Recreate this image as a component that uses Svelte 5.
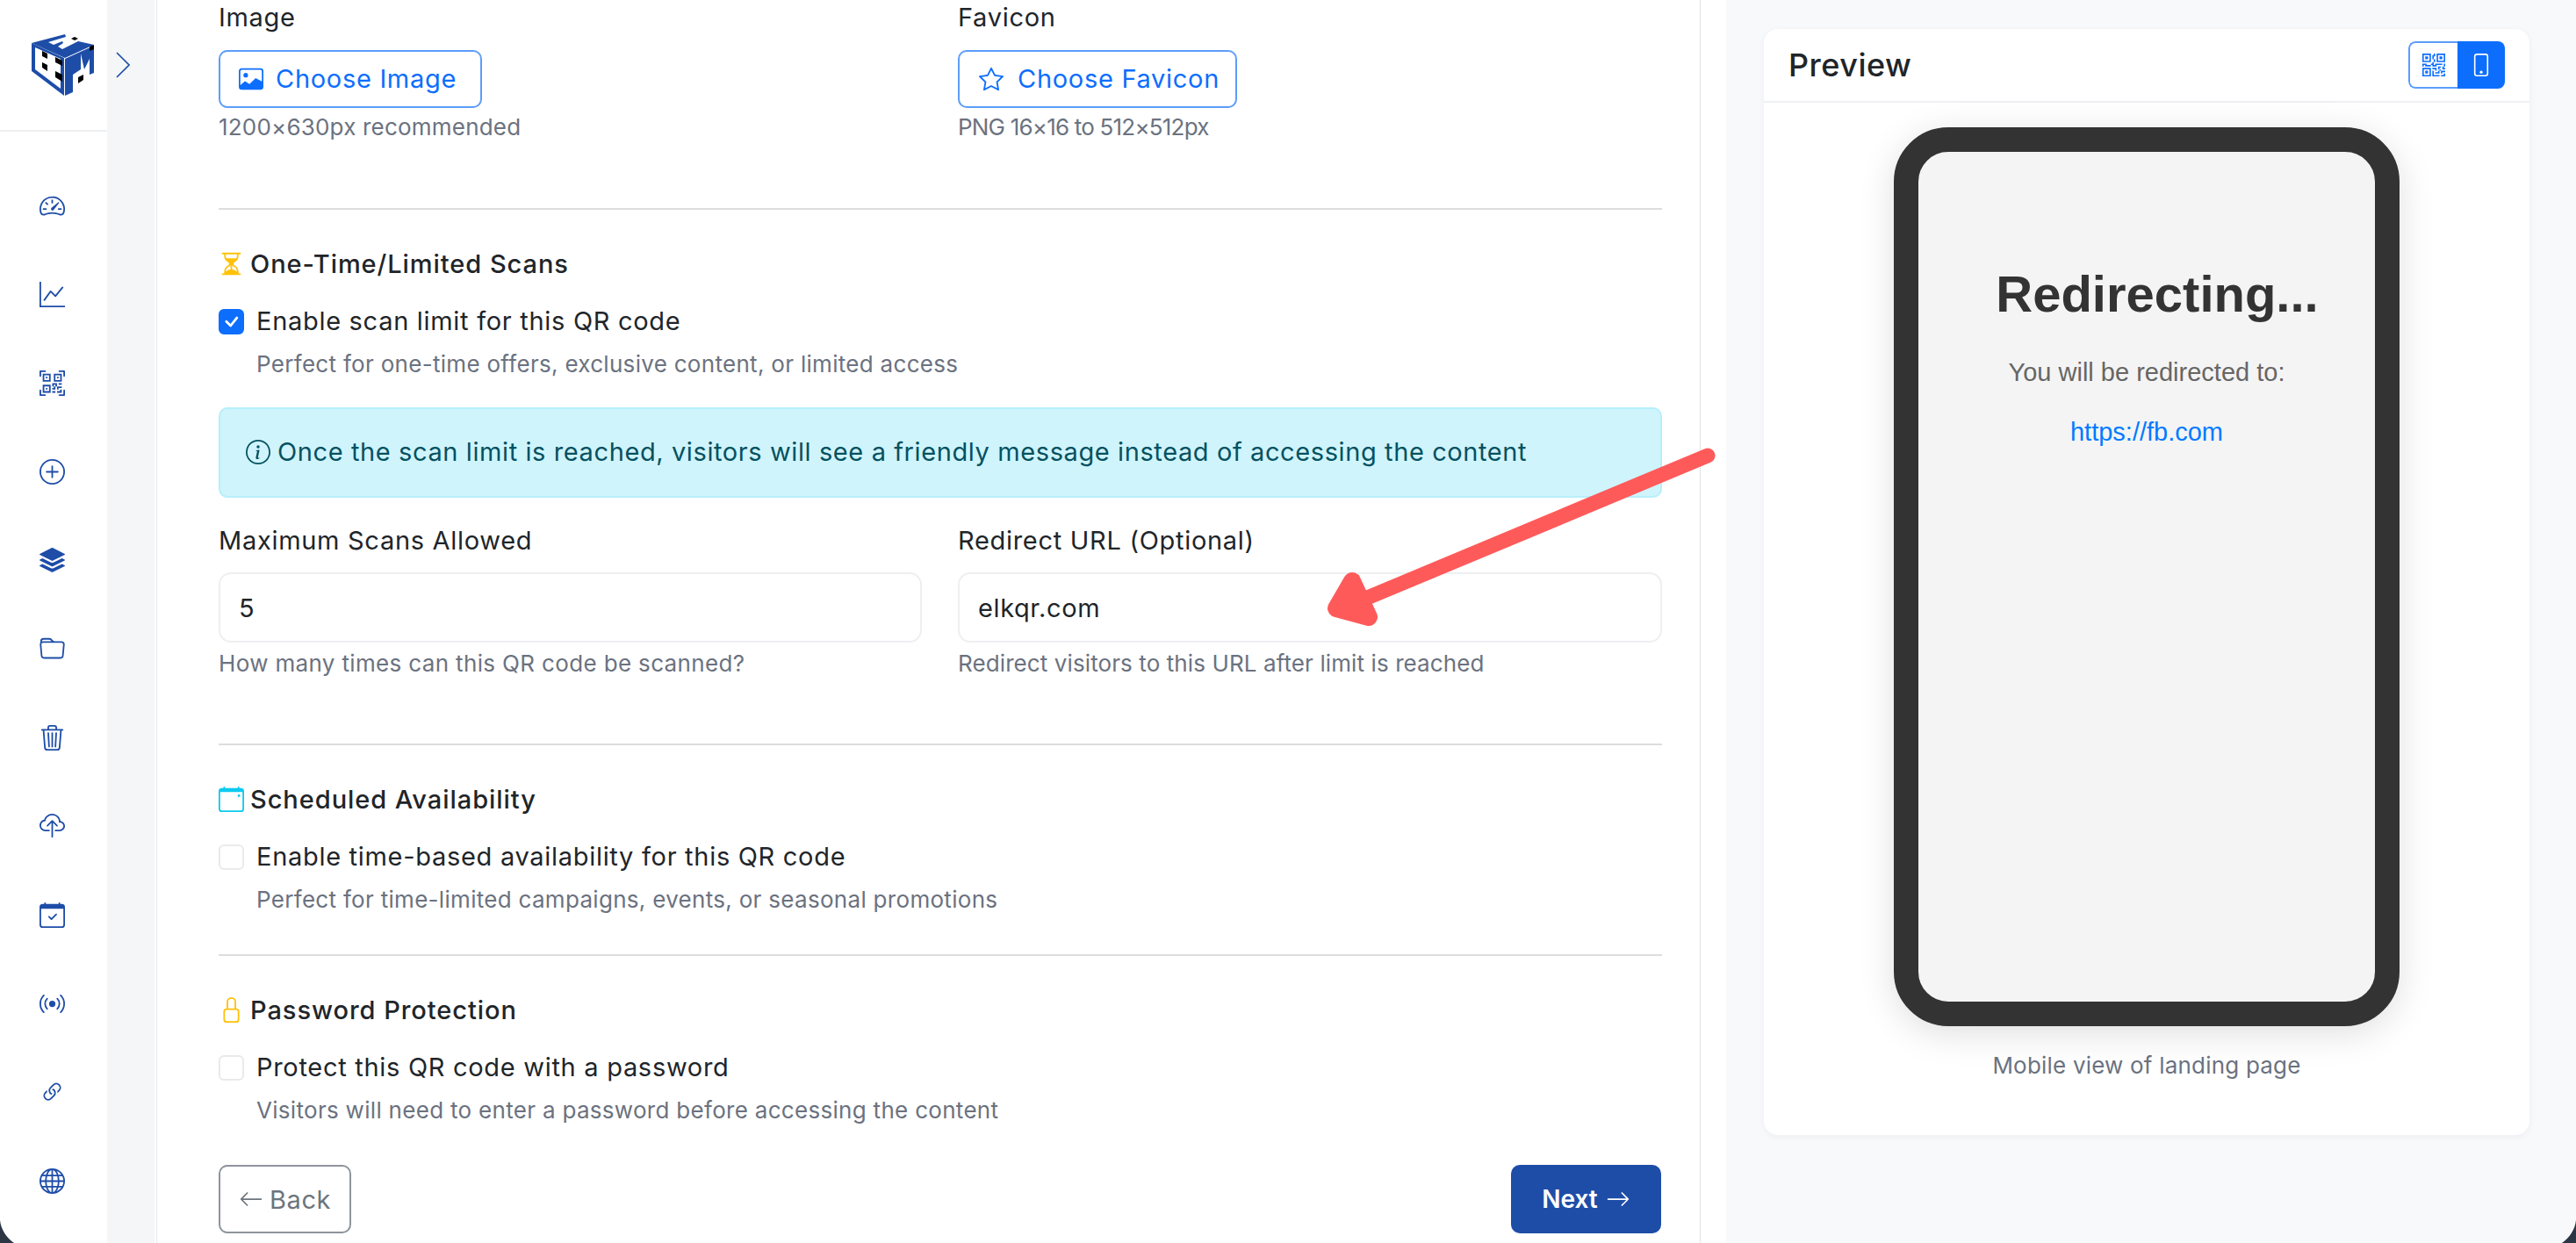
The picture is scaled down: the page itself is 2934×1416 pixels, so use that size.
<script>
  const icons = {
    speed: ["M8 4a.5.5 0 0 1 .5.5V6a.5.5 0 0 1-1 0V4.5A.5.5 0 0 1 8 4M3.732 5.732a.5.5 0 0 1 .707 0l.915.914a.5.5 0 1 1-.708.708l-.914-.915a.5.5 0 0 1 0-.707M2 10a.5.5 0 0 1 .5-.5h1.586a.5.5 0 0 1 0 1H2.5A.5.5 0 0 1 2 10m9.5 0a.5.5 0 0 1 .5-.5h1.5a.5.5 0 0 1 0 1H12a.5.5 0 0 1-.5-.5m.754-4.246a.39.39 0 0 0-.527-.02L7.547 9.31a.91.91 0 1 0 1.302 1.258l3.434-4.297a.39.39 0 0 0-.029-.518z", "M0 10a8 8 0 1 1 15.547 2.661c-.442 1.253-1.845 1.602-2.932 1.25C11.309 13.488 9.475 13 8 13c-1.474 0-3.31.488-4.615.911-1.087.352-2.49.003-2.932-1.25A8 8 0 0 1 0 10m8-7a7 7 0 0 0-6.603 9.329c.203.575.923.876 1.68.63C4.397 12.533 6.358 12 8 12s3.604.532 4.923.96c.757.245 1.477-.056 1.68-.631A7 7 0 0 0 8 3"],
    graph: ["M0 0h1v15h15v1H0zm14.817 3.113a.5.5 0 0 1 .07.704l-4.5 5.5a.5.5 0 0 1-.74.037L7.06 6.767l-3.656 5.027a.5.5 0 0 1-.808-.588l4-5.5a.5.5 0 0 1 .758-.06l2.609 2.61 4.15-5.073a.5.5 0 0 1 .704-.07"],
    qrscan: ["M0 .5A.5.5 0 0 1 .5 0h3a.5.5 0 0 1 0 1H1v2.5a.5.5 0 0 1-1 0zm12 0a.5.5 0 0 1 .5-.5h3a.5.5 0 0 1 .5.5v3a.5.5 0 0 1-1 0V1h-2.5a.5.5 0 0 1-.5-.5M.5 12a.5.5 0 0 1 .5.5V15h2.5a.5.5 0 0 1 0 1h-3a.5.5 0 0 1-.5-.5v-3a.5.5 0 0 1 .5-.5m15 0a.5.5 0 0 1 .5.5v3a.5.5 0 0 1-.5.5h-3a.5.5 0 0 1 0-1H15v-2.5a.5.5 0 0 1 .5-.5M4 4h1v1H4z", "M7 2H2v5h5zM3 3h3v3H3zm2 8H4v1h1z", "M7 9H2v5h5zm-4 1h3v3H3zm8-6h1v1h-1z", "M9 2h5v5H9zm1 1v3h3V3zM8 8v2h1v1H8v1h2v-2h1v2h1v-1h2v-1h-3V8zm2 2H9V9h1zm4 2h-1v1h-2v1h3zm-4 2v-1H8v1z", "M12 9h2V8h-2z"],
    qr: ["M2 2h2v2H2z", "M6 0v6H0V0zM5 1H1v4h4zM4 12H2v2h2z", "M6 10v6H0v-6zm-5 1v4h4v-4zm11-9h2v2h-2z", "M10 0v6h6V0zm5 1v4h-4V1zM8 1V0h1v2H8v2H7V1zm0 5V4h1v2zM6 8V7h1V6h1v2h1V7h5v1h-4v1H7V8zm0 0v1H2V8H1v1H0V7h3v1zm10 1h-1V7h1zm-1 0h-1v2h2v-1h-1zm-4 0h2v1h-1v1h-1zm2 3v-1h-1v1h-1v1H9v1h3v-2zm0 0h3v1h-2v1h-1zm-4-1v1h1v-2H7v1z", "M7 12h1v3h4v1H7zm9 2v2h-3v-1h2v-1z"],
    plus: ["M8 15A7 7 0 1 1 8 1a7 7 0 0 1 0 14m0 1A8 8 0 1 0 8 0a8 8 0 0 0 0 16", "M8 4a.5.5 0 0 1 .5.5v3h3a.5.5 0 0 1 0 1h-3v3a.5.5 0 0 1-1 0v-3h-3a.5.5 0 0 1 0-1h3v-3A.5.5 0 0 1 8 4"],
    stack: ["m14.12 10.163 1.715.858c.22.11.22.424 0 .534L8.267 15.34a.6.6 0 0 1-.534 0L.165 11.555a.299.299 0 0 1 0-.534l1.716-.858 5.317 2.659c.505.252 1.1.252 1.604 0l5.317-2.66zM7.733.063a.6.6 0 0 1 .534 0l7.568 3.784a.3.3 0 0 1 0 .535L8.267 8.165a.6.6 0 0 1-.534 0L.165 4.382a.299.299 0 0 1 0-.535z", "m14.12 6.576 1.715.858c.22.11.22.424 0 .534l-7.568 3.784a.6.6 0 0 1-.534 0L.165 7.968a.299.299 0 0 1 0-.534l1.716-.858 5.317 2.659c.505.252 1.1.252 1.604 0z"],
    folder: ["M.54 3.87.5 3a2 2 0 0 1 2-2h3.672a2 2 0 0 1 1.414.586l.828.828A2 2 0 0 0 9.828 3h3.982a2 2 0 0 1 1.992 2.181l-.637 7A2 2 0 0 1 13.174 14H2.826a2 2 0 0 1-1.991-1.819l-.637-7a2 2 0 0 1 .342-1.31zM2.19 4a1 1 0 0 0-.996 1.09l.637 7a1 1 0 0 0 .995.91h10.348a1 1 0 0 0 .995-.91l.637-7A1 1 0 0 0 13.81 4zm4.69-1.707A1 1 0 0 0 6.172 2H2.5a1 1 0 0 0-1 .981l.006.139q.323-.119.684-.12h5.396z"],
    trash: ["M6.5 1h3a.5.5 0 0 1 .5.5v1H6v-1a.5.5 0 0 1 .5-.5M11 2.5v-1A1.5 1.5 0 0 0 9.5 0h-3A1.5 1.5 0 0 0 5 1.5v1H1.5a.5.5 0 0 0 0 1h.538l.853 10.66A2 2 0 0 0 4.885 16h6.23a2 2 0 0 0 1.994-1.84l.853-10.66h.538a.5.5 0 0 0 0-1zm1.958 1-.846 10.58a1 1 0 0 1-.997.92h-6.23a1 1 0 0 1-.997-.92L3.042 3.5zm-7.487 1a.5.5 0 0 1 .528.47l.5 8.5a.5.5 0 0 1-.998.06L5 5.03a.5.5 0 0 1 .47-.53Zm5.058 0a.5.5 0 0 1 .47.53l-.5 8.5a.5.5 0 1 1-.998-.06l.5-8.5a.5.5 0 0 1 .528-.47M8 4.5a.5.5 0 0 1 .5.5v8.5a.5.5 0 0 1-1 0V5a.5.5 0 0 1 .5-.5"],
    cloud: ["M4.406 1.342A5.53 5.53 0 0 1 8 0c2.69 0 4.923 2 5.166 4.579C14.758 4.804 16 6.137 16 7.773 16 9.569 14.502 11 12.687 11H10a.5.5 0 0 1 0-1h2.688C13.979 10 15 8.988 15 7.773c0-1.216-1.02-2.228-2.313-2.228h-.5v-.5C12.188 2.825 10.328 1 8 1a4.53 4.53 0 0 0-2.941 1.1c-.757.652-1.153 1.438-1.153 2.055v.448l-.445.049C2.064 4.805 1 5.952 1 7.318 1 8.785 2.23 10 3.781 10H6a.5.5 0 0 1 0 1H3.781C1.708 11 0 9.366 0 7.318c0-1.763 1.266-3.223 2.942-3.593.143-.863.698-1.723 1.464-2.383", "M7.646 4.146a.5.5 0 0 1 .708 0l3 3a.5.5 0 0 1-.708.708L8.5 5.707V14.5a.5.5 0 0 1-1 0V5.707L5.354 7.854a.5.5 0 1 1-.708-.708z"],
    calcheck: ["M10.854 7.146a.5.5 0 0 1 0 .708l-3 3a.5.5 0 0 1-.708 0l-1.5-1.5a.5.5 0 1 1 .708-.708L7.5 9.793l2.646-2.647a.5.5 0 0 1 .708 0", "M3.5 0a.5.5 0 0 1 .5.5V1h8V.5a.5.5 0 0 1 1 0V1h1a2 2 0 0 1 2 2v11a2 2 0 0 1-2 2H2a2 2 0 0 1-2-2V3a2 2 0 0 1 2-2h1V.5a.5.5 0 0 1 .5-.5M1 4v10a1 1 0 0 0 1 1h12a1 1 0 0 0 1-1V4z"],
    broadcast: ["M3.05 3.05a7 7 0 0 0 0 9.9.5.5 0 0 1-.707.707 8 8 0 0 1 0-11.314.5.5 0 0 1 .707.707m2.122 2.122a4 4 0 0 0 0 5.656.5.5 0 1 1-.708.708 5 5 0 0 1 0-7.072.5.5 0 0 1 .708.708m5.656-.708a.5.5 0 0 1 .708 0 5 5 0 0 1 0 7.072.5.5 0 1 1-.708-.708 4 4 0 0 0 0-5.656.5.5 0 0 1 0-.708m2.122-2.12a.5.5 0 0 1 .707 0 8 8 0 0 1 0 11.313.5.5 0 0 1-.707-.707 7 7 0 0 0 0-9.9.5.5 0 0 1 0-.707zM10 8a2 2 0 1 1-4 0 2 2 0 0 1 4 0"],
    link: ["M4.715 6.542 3.343 7.914a3 3 0 1 0 4.243 4.243l1.828-1.829A3 3 0 0 0 8.586 5.5L8 6.086a1 1 0 0 0-.154.199 2 2 0 0 1 .861 3.337L6.88 11.45a2 2 0 1 1-2.83-2.83l.793-.792a4 4 0 0 1-.128-1.287z", "M6.586 4.672A3 3 0 0 0 7.414 9.5l.775-.776a2 2 0 0 1-.896-3.346L9.12 3.55a2 2 0 1 1 2.83 2.83l-.793.792c.112.42.155.855.128 1.287l1.372-1.372a3 3 0 1 0-4.243-4.243z"],
    globe: ["M0 8a8 8 0 1 1 16 0A8 8 0 0 1 0 8m7.5-6.923c-.67.204-1.335.82-1.887 1.855A8 8 0 0 0 5.145 4H7.5zM4.09 4a9.3 9.3 0 0 1 .64-1.539 7 7 0 0 1 .597-.933A7.03 7.03 0 0 0 2.255 4zm-.582 3.5c.03-.877.138-1.718.312-2.5H1.674a7 7 0 0 0-.656 2.5zM4.847 5a12.5 12.5 0 0 0-.338 2.5H7.5V5zM8.5 5v2.5h2.99a12.5 12.5 0 0 0-.337-2.5zM4.51 8.5a12.5 12.5 0 0 0 .337 2.5H7.5V8.5zm3.99 0V11h2.653c.187-.765.306-1.608.338-2.5zM5.145 12q.208.58.468 1.068c.552 1.035 1.218 1.65 1.887 1.855V12zm.182 2.472a7 7 0 0 1-.597-.933A9.3 9.3 0 0 1 4.09 12H2.255a7 7 0 0 0 3.072 2.472M3.82 11a13.7 13.7 0 0 1-.312-2.5h-2.49c.062.89.291 1.733.656 2.5zm6.853 3.472A7 7 0 0 0 13.745 12H11.91a9.3 9.3 0 0 1-.64 1.539 7 7 0 0 1-.597.933M8.5 12v2.923c.67-.204 1.335-.82 1.887-1.855q.26-.487.468-1.068zm3.68-1h2.146c.365-.767.594-1.61.656-2.5h-2.49a13.7 13.7 0 0 1-.312 2.5m2.802-3.5a7 7 0 0 0-.656-2.5H12.18c.174.782.282 1.623.312 2.5zM11.27 2.461c.247.464.462.98.64 1.539h1.835a7 7 0 0 0-3.072-2.472c.218.284.418.598.597.933M10.855 4a8 8 0 0 0-.468-1.068C9.835 1.897 9.17 1.282 8.5 1.077V4z"],
    image: ["M6.002 5.5a1.5 1.5 0 1 1-3 0 1.5 1.5 0 0 1 3 0", "M2.002 1a2 2 0 0 0-2 2v10a2 2 0 0 0 2 2h12a2 2 0 0 0 2-2V3a2 2 0 0 0-2-2zm12 1a1 1 0 0 1 1 1v6.5l-3.777-1.947a.5.5 0 0 0-.577.093l-3.71 3.71-2.66-1.772a.5.5 0 0 0-.63.062L1.002 12V3a1 1 0 0 1 1-1z"],
    star: ["M2.866 14.85c-.078.444.36.791.746.593l4.39-2.256 4.389 2.256c.386.198.824-.149.746-.592l-.83-4.73 3.522-3.356c.33-.314.16-.888-.282-.95l-4.898-.696L8.465.792a.513.513 0 0 0-.927 0L5.354 5.12l-4.898.696c-.441.062-.612.636-.283.95l3.523 3.356-.83 4.73zm4.905-2.767-3.686 1.894.694-3.957a.56.56 0 0 0-.163-.505L1.71 6.745l4.052-.576a.53.53 0 0 0 .393-.288L8 2.223l1.847 3.658a.53.53 0 0 0 .393.288l4.052.575-2.906 2.77a.56.56 0 0 0-.163.506l.694 3.957-3.686-1.894a.5.5 0 0 0-.461 0z"],
    hourglass: ["M2.5 15a.5.5 0 1 1 0-1h1v-1a4.5 4.5 0 0 1 2.557-4.06c.29-.139.443-.377.443-.59v-.7c0-.213-.154-.451-.443-.59A4.5 4.5 0 0 1 3.5 3V2h-1a.5.5 0 0 1 0-1h11a.5.5 0 0 1 0 1h-1v1a4.5 4.5 0 0 1-2.557 4.06c-.29.139-.443.377-.443.59v.7c0 .213.154.451.443.59A4.5 4.5 0 0 1 12.5 13v1h1a.5.5 0 0 1 0 1zm2-13v1c0 .537.12 1.045.337 1.5h6.326c.216-.455.337-.963.337-1.5V2zm3 6.35c0 .701-.478 1.236-1.011 1.492A3.5 3.5 0 0 0 4.5 13s.866-1.299 3-1.48zm1 0v3.17c2.134.181 3 1.48 3 1.48a3.5 3.5 0 0 0-1.989-3.158C8.978 9.586 8.5 9.052 8.5 8.351z"],
    calendar: ["M12 5.5a.5.5 0 0 1 .5-.5h.5a.5.5 0 0 1 .5.5v.5a.5.5 0 0 1-.5.5h-.5a.5.5 0 0 1-.5-.5z", "M3.5 0a.5.5 0 0 1 .5.5V1h8V.5a.5.5 0 0 1 1 0V1h1a2 2 0 0 1 2 2v11a2 2 0 0 1-2 2H2a2 2 0 0 1-2-2V3a2 2 0 0 1 2-2h1V.5a.5.5 0 0 1 .5-.5M1 3.4V14a1 1 0 0 0 1 1h12a1 1 0 0 0 1-1V3.4z"],
    lock: ["M8 1a2 2 0 0 1 2 2v4H6V3a2 2 0 0 1 2-2m3 6V3a3 3 0 0 0-6 0v4a2 2 0 0 0-2 2v5a2 2 0 0 0 2 2h6a2 2 0 0 0 2-2V9a2 2 0 0 0-2-2M5 8h6a1 1 0 0 1 1 1v5a1 1 0 0 1-1 1H5a1 1 0 0 1-1-1V9a1 1 0 0 1 1-1"],
    phone: ["M11 1a1 1 0 0 1 1 1v12a1 1 0 0 1-1 1H5a1 1 0 0 1-1-1V2a1 1 0 0 1 1-1zM5 0a2 2 0 0 0-2 2v12a2 2 0 0 0 2 2h6a2 2 0 0 0 2-2V2a2 2 0 0 0-2-2z", "M8 14a1 1 0 1 0 0-2 1 1 0 0 0 0 2"],
    info: ["M8 15A7 7 0 1 1 8 1a7 7 0 0 1 0 14m0 1A8 8 0 1 0 8 0a8 8 0 0 0 0 16", "m8.93 6.588-2.29.287-.082.38.45.083c.294.07.352.176.288.469l-.738 3.468c-.194.897.105 1.319.808 1.319.545 0 1.178-.252 1.465-.598l.088-.416c-.2.176-.492.246-.686.246-.275 0-.375-.193-.304-.533zM9 4.5a1 1 0 1 1-2 0 1 1 0 0 1 2 0"],
    left: ["M15 8a.5.5 0 0 0-.5-.5H2.707l3.147-3.146a.5.5 0 1 0-.708-.708l-4 4a.5.5 0 0 0 0 .708l4 4a.5.5 0 0 0 .708-.708L2.707 8.5H14.5A.5.5 0 0 0 15 8"],
    right: ["M1 8a.5.5 0 0 1 .5-.5h11.793l-3.147-3.146a.5.5 0 0 1 .708-.708l4 4a.5.5 0 0 1 0 .708l-4 4a.5.5 0 0 1-.708-.708L13.293 8.5H1.5A.5.5 0 0 1 1 8"],
    check: ["M10.97 4.97a.75.75 0 0 1 1.07 1.05l-3.99 4.99a.75.75 0 0 1-1.08.02L4.324 8.384a.75.75 0 1 1 1.06-1.06l2.094 2.093 3.473-4.425z"]
  };
  const nav = ["speed", "graph", "qrscan", "plus", "stack", "folder", "trash", "cloud", "calcheck", "broadcast", "link", "globe"];
</script>

{#snippet icon(name, cls)}
  <svg class={"ic " + cls} viewBox="0 0 16 16" fill="currentColor" aria-hidden="true">
    {#each icons[name] as d}<path {d} fill-rule="evenodd" />{/each}
  </svg>
{/snippet}

<div class="app">
  <aside class="sidebar">
    <div class="brand">
      <svg class="logo" viewBox="37 36 72 74" aria-hidden="true">
        <polygon points="37,48 74,65 74,108 37,80" fill="#1e4da8" />
        <polygon points="41,53 70,66 70,100 41,78" fill="#fff" />
        <polygon points="37,48 75,38 76,41 56,47 62,50 72,46 73,48 67,52 72,55 90,46 108,50 75,65" fill="#1e4da8" />
        <polygon points="75,66 108,51 108,82 103,84 103,66 97,78 93,60 93,78 84,84 84,104 75,108" fill="#1e4da8" />
        <polygon points="49,57 55,60 55,66 49,63" fill="#000" />
        <polygon points="49,70 55,73 55,80 49,76" fill="#000" />
        <polygon points="64,64 72,68 72,74 64,70" fill="#000" />
        <polygon points="64,80 72,84 72,92 64,87" fill="#000" />
        <polygon points="90,87 96,84 96,90 90,94" fill="#000" />
        <polygon points="82,43 86,41 90,43 86,45" fill="#000" />
        <polygon points="103,52 108,50 108,55 103,57" fill="#000" />
      </svg>
    </div>
    <nav class="nav">
      {#each nav as n}
        <a class="nav-item" href="#top">{@render icon(n, "nav-ic")}</a>
      {/each}
    </nav>
  </aside>

  <div class="strip">
    <svg class="chev" viewBox="0 0 16 30" fill="none" stroke="#1e4da8" stroke-width="1.6" aria-hidden="true"><path d="M1 1l14 14L1 29" /></svg>
  </div>

  <main class="panel">
    <div class="cols">
      <div>
        <div class="label">Image</div>
        <button class="pick pick-image">{@render icon("image", "pick-ic")}<span>Choose Image</span></button>
        <div class="hint">1200×630px recommended</div>
      </div>
      <div>
        <div class="label">Favicon</div>
        <button class="pick pick-fav">{@render icon("star", "pick-ic")}<span>Choose Favicon</span></button>
        <div class="hint hint-png">PNG 16×16 to 512×512px</div>
      </div>
    </div>

    <hr class="rule rule-a" />

    <h3 class="sec">{@render icon("hourglass", "sec-ic amber")}<span>One-Time/Limited Scans</span></h3>
    <div class="check-row">
      <span class="box on">{@render icon("check", "tick")}</span>
      <span class="check-label">Enable scan limit for this QR code</span>
    </div>
    <div class="check-desc">Perfect for one-time offers, exclusive content, or limited access</div>

    <div class="alert">{@render icon("info", "info-ic")}<span>Once the scan limit is reached, visitors will see a friendly message instead of accessing the content</span></div>

    <div class="cols fields">
      <div>
        <div class="label">Maximum Scans Allowed</div>
        <div class="input">5</div>
        <div class="hint hint-f">How many times can this QR code be scanned?</div>
      </div>
      <div>
        <div class="label">Redirect URL (Optional)</div>
        <div class="input">elkqr.com</div>
        <div class="hint hint-f hint-url">Redirect visitors to this URL after limit is reached</div>
      </div>
    </div>

    <hr class="rule rule-b" />

    <h3 class="sec">{@render icon("calendar", "sec-ic cyan")}<span>Scheduled Availability</span></h3>
    <div class="check-row"><span class="box"></span><span class="check-label">Enable time-based availability for this QR code</span></div>
    <div class="check-desc">Perfect for time-limited campaigns, events, or seasonal promotions</div>

    <hr class="rule rule-c" />

    <h3 class="sec">{@render icon("lock", "sec-ic amber")}<span>Password Protection</span></h3>
    <div class="check-row"><span class="box"></span><span class="check-label">Protect this QR code with a password</span></div>
    <div class="check-desc">Visitors will need to enter a password before accessing the content</div>

    <div class="actions">
      <button class="btn back">{@render icon("left", "btn-ic")}<span>Back</span></button>
      <button class="btn next"><span>Next</span>{@render icon("right", "btn-ic")}</button>
    </div>
  </main>

  <div class="gutter"></div>

  <section class="side">
    <div class="card">
      <header class="card-head">
        <h2>Preview</h2>
        <div class="toggle">
          <span class="tg first">{@render icon("qr", "tg-ic")}</span>
          <span class="tg active">{@render icon("phone", "tg-ic")}</span>
        </div>
      </header>
      <div class="card-body">
        <div class="device">
          <div class="screen">
            <h1>Redirecting...</h1>
            <p>You will be redirected to:</p>
            <a href="#top">https://fb.com</a>
          </div>
        </div>
        <div class="caption">Mobile view of landing page</div>
      </div>
    </div>
  </section>

  <svg class="arrow" viewBox="0 0 2934 1416" aria-hidden="true">
    <line x1="1945" y1="519" x2="1550" y2="684" stroke="#ff5a5a" stroke-width="17" stroke-linecap="round" />
    <polygon points="1540,662 1522,693 1559,703" fill="#ff5a5a" stroke="#ff5a5a" stroke-width="20" stroke-linejoin="round" />
  </svg>
  <svg class="corner corner-l" viewBox="0 0 16 26" aria-hidden="true"><path d="M0 0C1 10 7 20 16 26H0z" fill="#2c3644" /></svg>
  <svg class="corner corner-r" viewBox="0 0 16 26" aria-hidden="true"><path d="M16 0C15 10 9 20 0 26H16z" fill="#2c3644" /></svg>
</div>

<style>
  :global(body) { margin: 0; background: #fff; }
  .app {
    position: relative; display: flex; width: 2934px; height: 1416px; overflow: hidden;
    font-family: Inter, "Liberation Sans", sans-serif; color: #212529; background: #fff;
  }
  .ic { display: block; flex: none; width: 1em; height: 1em; }

  .sidebar { width: 122px; flex: none; background: #fff; }
  .brand { height: 150px; box-sizing: border-box; padding: 37px 0 0 36px; border-bottom: 2px solid #eeeff1; }
  .logo { display: block; width: 72px; height: 74px; }
  .nav { display: flex; flex-direction: column; align-items: center; gap: 72px; padding: 70px 6px 0 0; margin-left: 0; width: 118px; }
  .nav-item { display: block; height: 29px; color: #1e4da8; }
  .nav-ic { font-size: 29px; }

  .strip { width: 54px; flex: none; background: #f5f6f8; padding: 59px 0 0 10px; box-sizing: border-box; }
  .chev { display: block; width: 16px; height: 30px; }

  .panel {
    width: 1759px; flex: none; box-sizing: border-box; margin-left: 2px; padding: 0 43px 0 70px;
    border-left: 1px solid #e6e8ec; border-right: 1px solid #dfe2e8; background: #fff;
  }
  .cols { display: grid; grid-template-columns: 801px 802px; column-gap: 41px; }
  .label { font-size: 29px; line-height: 40px; color: #212529; letter-spacing: 0.7px; }
  .pick {
    display: flex; align-items: center; height: 66px; margin-top: 17px; padding: 0; box-sizing: border-box;
    background: #fff; border: 2px solid #5c9dfb; border-radius: 10px; color: #0d6efd;
    font: inherit; font-size: 29px; line-height: 40px; letter-spacing: 0.7px;
  }
  .pick-image { width: 300px; padding-left: 21px; gap: 14px; }
  .pick-fav { width: 318px; padding-left: 22px; gap: 16px; }
  .pick-ic { font-size: 28px; }
  .hint { font-size: 26px; line-height: 36px; margin-top: 4px; color: #6b7280; letter-spacing: 0.2px; }
  .hint-png { letter-spacing: -0.8px; }
  .hint-f { margin-top: 6px; letter-spacing: 0.35px; }
  .hint-url { letter-spacing: 0.1px; }

  .rule { border: 0; height: 2px; margin: 0; background: #dcdddf; }
  .rule-a { margin-top: 74px; }
  .rule-b { margin-top: 73px; }
  .rule-c { margin-top: 44px; }

  .sec { display: flex; align-items: center; gap: 7px; margin: 41px 0 0; height: 40px; font-size: 29px; font-weight: 500; letter-spacing: 0.95px; color: #212529; }
  .sec-ic { font-size: 29px; }
  .amber { color: #ffc107; }
  .cyan { color: #0dcaf0; }

  .check-row { display: flex; align-items: center; gap: 14px; height: 40px; margin-top: 26px; }
  .box { display: flex; align-items: center; justify-content: center; width: 29px; height: 29px; box-sizing: border-box; border: 2px solid #e9eaec; border-radius: 6px; background: #fff; flex: none; }
  .box.on { background: #0d6efd; border-color: #0d6efd; color: #fff; }
  .tick { font-size: 29px; }
  .check-label { font-size: 29px; line-height: 40px; letter-spacing: 0.7px; }
  .check-desc { margin: 11px 0 0 43px; font-size: 26px; line-height: 36px; color: #6b7280; letter-spacing: 0.3px; }

  .alert {
    display: flex; align-items: center; gap: 8px; height: 103px; box-sizing: border-box; margin-top: 31px; padding: 0 0 2px 29px;
    background: #cff4fc; border: 2px solid #b6effb; border-radius: 10px; color: #055160; font-size: 29px; line-height: 40px; letter-spacing: 0.6px;
  }
  .info-ic { font-size: 28px; }

  .fields { margin-top: 29px; }
  .input {
    height: 80px; box-sizing: border-box; margin-top: 16px; padding: 0 21px; display: flex; align-items: center;
    border: 2px solid #eeeff1; border-radius: 14px; background: #fff; font-size: 29px; letter-spacing: 0.6px; color: #212529;
  }

  .actions { display: flex; justify-content: space-between; align-items: stretch; height: 78px; margin-top: 44px; }
  .btn { display: flex; align-items: center; justify-content: center; gap: 7px; box-sizing: border-box; border-radius: 10px; font: inherit; font-size: 28px; padding: 0; }
  .back { width: 151px; background: #fff; border: 2px solid #8d949c; color: #6c757d; font-size: 29px; letter-spacing: 0.6px; }
  .next { width: 171px; background: #1e4da8; border: 0; color: #fff; font-weight: 600; margin-right: 1px; gap: 9px; }
  .btn-ic { font-size: 28px; }

  .gutter { width: 29px; flex: none; background: #fff; }
  .side { flex: 1; background: #f8f9fb; padding: 33px 53px 0 43px; box-sizing: border-box; }
  .card { background: #fff; height: 1260px; border-radius: 16px; box-shadow: 0 2px 8px rgba(30, 40, 60, 0.05); overflow: hidden; }
  .card-head { display: flex; align-items: center; justify-content: space-between; height: 84px; box-sizing: border-box; padding: 0 28px 0 28px; border-bottom: 2px solid #eff0f3; }
  .card-head h2 { margin: 0; font-size: 36px; font-weight: 500; letter-spacing: 0.5px; color: #212529; }
  .toggle { display: flex; height: 54px; width: 110px; border-radius: 8px; overflow: hidden; }
  .tg { flex: 1; display: flex; align-items: center; justify-content: center; color: #0d6efd; background: #fff; box-sizing: border-box; }
  .tg.first { border: 2px solid #5c9dfb; border-right: 0; border-radius: 8px 0 0 8px; }
  .tg.active { background: #0d6efd; color: #fff; }
  .tg-ic { font-size: 26px; }

  .card-body { display: flex; flex-direction: column; align-items: center; padding-top: 28px; }
  .device {
    width: 576px; height: 1024px; box-sizing: border-box; border: 28px solid #333; border-radius: 62px; background: #f4f4f4;
    box-shadow: 0 8px 40px rgba(0, 0, 0, 0.13); overflow: hidden;
  }
  .screen { display: flex; flex-direction: column; align-items: center; height: 100%; padding-top: 127px; font-family: "Liberation Sans", Arial, sans-serif; }
  .screen h1 { margin: 0 0 0 24px; font-size: 58px; line-height: 70px; font-weight: 700; color: #333; }
  .screen p { margin: 34px 0 0; font-size: 29px; line-height: 40px; color: #666; }
  .screen a { margin-top: 28px; font-size: 29px; line-height: 40px; color: #007bff; text-decoration: none; }
  .caption { margin-top: 27px; font-size: 26px; line-height: 36px; color: #6b7280; letter-spacing: 0.2px; }

  .arrow { position: absolute; left: 0; top: 0; width: 2934px; height: 1416px; pointer-events: none; }
  .corner { position: absolute; bottom: 0; width: 16px; height: 26px; }
  .corner-l { left: 0; }
  .corner-r { right: 0; }
</style>
